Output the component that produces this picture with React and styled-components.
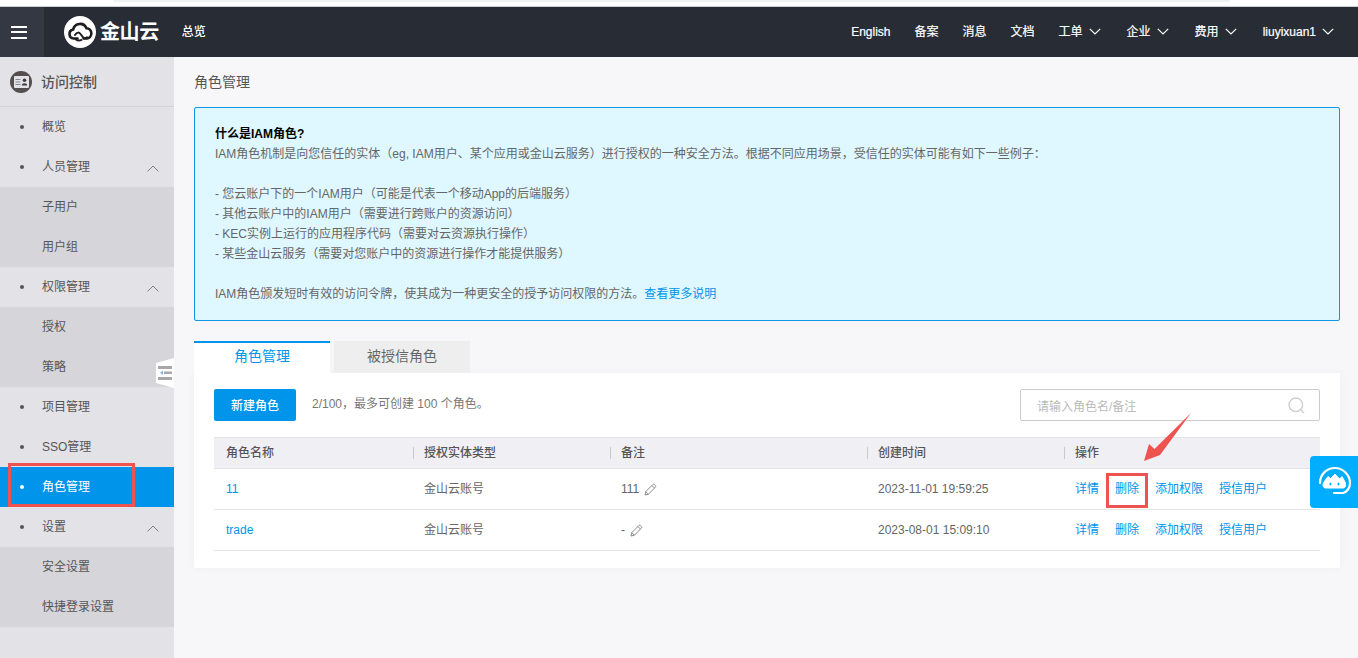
import React from "react";
import styled, { createGlobalStyle } from "styled-components";

const Global = createGlobalStyle`
  html, body { margin: 0; padding: 0; height: 100%; background: #f7f7f9; }
  body { font: 12px/20px "Liberation Sans", "Noto Sans CJK SC", sans-serif; color: #666; overflow: hidden; }
  * { box-sizing: border-box; }
`;

const Page = styled.div`
  position: relative;
  width: 1358px;
  height: 658px;
  display: flex;
  flex-direction: column;
  overflow: hidden;
`;
const TopStrip = styled.div`
  height: 7px;
  flex: none;
  background: #fff;
  border-bottom: 1px solid #d0d0d0;
  padding: 0 128px 0 113px;
`;
const AddressEdge = styled.div`
  height: 2px;
  background: #eff3f3;
  border-radius: 0 0 4px 4px;
`;
const Header = styled.header`
  height: 50px;
  flex: none;
  background: #282c34;
  display: flex;
  align-items: center;
  color: #fff;
  padding-right: 22px;
`;
const MenuButton = styled.div`
  width: 44px;
  height: 100%;
  background: #333842;
  display: flex;
  flex-direction: column;
  justify-content: center;
  gap: 3.5px;
  padding-left: 11px;
`;
const MenuBar = styled.span`
  display: block;
  width: 16px;
  height: 2px;
  background: #fff;
`;
const Logo = styled.div`
  display: flex;
  align-items: center;
  margin-left: 20px;
  gap: 4px;
`;
const LogoText = styled.span`
  font-size: 20px;
  font-weight: 700;
  line-height: 32px;
  letter-spacing: -0.4px;
  color: #fff;
`;
const Overview = styled.span`
  margin-left: 23px;
  margin-top: -1px;
  font-weight: 500;
  color: #fff;
`;
const TopNav = styled.nav`
  margin-left: auto;
  display: flex;
  align-items: center;
  gap: 24px;
`;
const TopItem = styled.span`
  display: flex;
  align-items: center;
  gap: 6px;
  margin-top: -1px;
  color: #fff;
  -webkit-text-stroke: 0.2px #fff;
`;
const ChevronIcon = styled.svg`
  margin-right: 2px;
`;
const Body = styled.div`
  flex: 1;
  display: flex;
  min-height: 0;
`;
const Sidebar = styled.aside`
  position: relative;
  width: 174px;
  flex: none;
  background: #e3e2e7;
`;
const SideTitle = styled.div`
  height: 50px;
  display: flex;
  align-items: center;
  gap: 9px;
  padding-left: 10px;
  border-bottom: 1px solid #d3d2d7;
  font-size: 14px;
  font-weight: 500;
  color: #555;
`;
const NavRow = styled.div`
  position: relative;
  height: 40px;
  display: flex;
  align-items: center;
  padding-left: 20px;
  color: ${(p) => (p.$active ? "#fff" : "#555")};
  background: ${(p) => (p.$active ? "#0094ea" : "transparent")};
`;
const Dot = styled.span`
  width: 4px;
  height: 4px;
  border-radius: 50%;
  margin-right: 18px;
  background: ${(p) => (p.$active ? "#fff" : "#555")};
`;
const Caret = styled.svg`
  position: absolute;
  right: 15px;
  top: 18px;
`;
const SubRow = styled.div`
  height: 40px;
  display: flex;
  align-items: center;
  padding-left: 42px;
  color: #555;
  background: #d6d5d9;
`;
const RedFrame = styled.span`
  position: absolute;
  border: 3px solid #ef5350;
  pointer-events: none;
`;
const NavFrame = styled(RedFrame)`
  left: 8px;
  top: -4px;
  width: 127px;
  height: 44px;
`;
const Handle = styled.div`
  position: absolute;
  left: 156px;
  top: 301px;
  width: 18px;
  height: 30px;
  background: #fff;
  clip-path: polygon(0 5px, 100% 0, 100% 100%, 0 25px);
  display: flex;
  align-items: center;
  padding-left: 2px;
`;
const Main = styled.main`
  flex: 1;
  min-width: 0;
  padding: 0 18px 0 20px;
`;
const PageTitle = styled.h1`
  margin: 0;
  height: 50px;
  display: flex;
  align-items: center;
  font-size: 14px;
  font-weight: 400;
  color: #555;
`;
const Notice = styled.section`
  height: 214px;
  padding: 16px 20px;
  border: 1px solid #0f97e6;
  border-radius: 2px;
  background: #dff7ff;
  color: #666;
`;
const NoticeHead = styled.div`
  font-weight: 700;
  color: #000;
`;
const NoticeLine = styled.div`
  min-height: 20px;
`;
const Link = styled.a`
  position: relative;
  color: #0094ea;
  text-decoration: none;
`;
const Tabs = styled.div`
  margin-top: 20px;
  display: flex;
  gap: 4px;
`;
const Tab = styled.div`
  width: 136px;
  height: 32px;
  padding-bottom: 5px;
  display: flex;
  align-items: center;
  justify-content: center;
  font-size: 14px;
  color: ${(p) => (p.$active ? "#0094ea" : "#666")};
  background: ${(p) => (p.$active ? "#fff" : "#eee")};
  border-top: 2px solid ${(p) => (p.$active ? "#0094ea" : "#eee")};
`;
const Panel = styled.section`
  height: 195px;
  padding: 16px 20px;
  background: #fff;
  border-radius: 0 0 2px 2px;
  box-shadow: 0 0 10px rgba(0, 0, 0, 0.04);
`;
const Toolbar = styled.div`
  display: flex;
  align-items: center;
  height: 32px;
`;
const PrimaryButton = styled.button`
  width: 82px;
  height: 32px;
  padding: 2px 0 0;
  border: 0;
  border-radius: 2px;
  background: #0094ea;
  color: #fff;
  font: inherit;
  font-weight: 500;
`;
const Quota = styled.span`
  margin: -3px 0 0 16px;
  color: #777;
`;
const Search = styled.div`
  margin-left: auto;
  width: 300px;
  height: 32px;
  border: 1px solid #ccc;
  border-radius: 2px;
  display: flex;
  align-items: center;
  justify-content: space-between;
  padding: 0 14px 0 16px;
  color: #bbb;
`;
const Placeholder = styled.span`
  margin-top: 3px;
`;
const TableGrid = styled.div`
  display: grid;
  grid-template-columns: 199px 197px 257px 197px 1fr;
  align-items: center;
`;
const HeadRow = styled(TableGrid)`
  margin-top: 16px;
  height: 32px;
  background: #f0eff4;
  border-top: 1px solid #e3e3e6;
  border-bottom: 1px solid #e3e3e6;
  font-weight: 500;
  color: #555;
`;
const HeadCell = styled.div`
  height: 12px;
  display: flex;
  align-items: center;
  padding-left: ${(p) => (p.$first ? "12px" : "10px")};
  border-left: ${(p) => (p.$first ? "0" : "1px solid #c9c9cc")};
`;
const DataRow = styled(TableGrid)`
  height: 41px;
  border-bottom: 1px solid #e6e6e6;
  color: #666;
`;
const Cell = styled.div`
  display: flex;
  align-items: center;
  gap: 5px;
  padding-left: ${(p) => (p.$first ? "12px" : "11px")};
`;
const Actions = styled(Cell)`
  gap: 16px;
`;
const ActionFrame = styled(RedFrame)`
  left: -9px;
  right: -9px;
  top: -6px;
  bottom: -9px;
`;
const Arrow = styled.svg`
  position: absolute;
  left: 1140px;
  top: 410px;
`;
const Float = styled.div`
  position: absolute;
  left: 1310px;
  top: 456px;
  width: 48px;
  height: 52px;
  background: #00adff;
  border-radius: 4px 0 0 4px;
`;

const Chevron = () => (
  <ChevronIcon width="12" height="7" viewBox="0 0 12 7" fill="none">
    <path d="M.8.8 6 6l5.200-5.200" stroke="#fff" strokeWidth="1.200" />
  </ChevronIcon>
);
const Pencil = () => (
  <svg width="13" height="13" viewBox="0 0 13 13" fill="none" stroke="#8a8a8a" strokeWidth="1">
    <path d="M1 12 1.800 8.600 8.900 1.500a1 1 0 0 1 1.400 0l1.200 1.200a1 1 0 0 1 0 1.400L4.400 11.200Z" />
    <path d="M1.800 8.600 4.400 11.200M8 2.600 10.400 5" />
  </svg>
);

const LogoMark = () => (
  <svg width="32" height="32" viewBox="0 0 32 32" fill="none">
    <circle cx="16" cy="16" r="16" fill="#fff" />
    <path
      d="M13.500 22.500H9.800a4.600 4.600 0 0 1-.6-9.100 7 7 0 0 1 13.300-1.200 5.200 5.200 0 0 1 .6 10.300h-3.400"
      stroke="#1d1d1f"
      strokeWidth="2.600"
      strokeLinecap="round"
    />
    <path
      d="M11 19c2-3 4-3 5.500-1l2.800 3.500c1.200 1.400 2.600 1 3.700-.3M12 23.500c1.700 1.400 3.700 1.300 5.500.4"
      stroke="#1d1d1f"
      strokeWidth="2"
      strokeLinecap="round"
    />
  </svg>
);

const AccessIcon = () => (
  <svg width="22" height="22" viewBox="0 0 22 22">
    <circle cx="11" cy="11" r="11" fill="#55504f" />
    <rect x="4" y="5" width="15" height="12" rx="1" fill="#e3e2e7" />
    <path d="M5.500 8h5v1h-5zM5.500 10.500h5v1h-5zM5.500 13h5v1h-5z" fill="#8a8a8c" />
    <circle cx="14.500" cy="9.300" r="1.800" fill="#3f3c3c" />
    <path d="M11.800 14.500c0-3 5.400-3 5.400 0z" fill="#3f3c3c" />
  </svg>
);

const HandleIcon = () => (
  <svg width="14" height="14" viewBox="0 0 14 14">
    <path d="M0 0h14v3H0zM6 5.500h8v2.600H6zM0 11h14v3H0z" fill="#a8a8a8" />
    <path d="M5 4.500 2 6.800 5 9z" fill="#7fb6dd" />
  </svg>
);

const SearchIcon = () => (
  <svg width="17" height="17" viewBox="0 0 17 17" fill="none" stroke="#cfcfcf" strokeWidth="1.400">
    <circle cx="7.800" cy="7.800" r="6.800" />
    <path d="M12.800 12.800 16 16" />
  </svg>
);

const SupportIcon = () => (
  <svg width="48" height="52" viewBox="0 0 48 52" fill="none">
    <path
      d="M10 27c0-9 7-15 15-15s15 7 15 15c0 5-3 9-7 10h-9"
      stroke="#fff"
      strokeWidth="2.200"
      strokeLinecap="round"
    />
    <path
      d="M15 32c-2.500-.8-2.500-4-1-6l4-5.500 2.500 2L25 18l4.500 5 2.500-2.500 3 5.500c1.200 2.500 1 6-2 6z"
      fill="#fff"
      stroke="#fff"
      strokeLinejoin="round"
    />
    <ellipse cx="20.500" cy="28" rx="1" ry="1.500" fill="#00adff" />
    <ellipse cx="28.500" cy="28" rx="1" ry="1.500" fill="#00adff" />
  </svg>
);

const nav = [
  { label: "概览" },
  { label: "人员管理", subs: ["子用户", "用户组"] },
  { label: "权限管理", subs: ["授权", "策略"] },
  { label: "项目管理" },
  { label: "SSO管理" },
  { label: "角色管理", active: true },
  { label: "设置", subs: ["安全设置", "快捷登录设置"] },
];

const topItems = [
  ["English"],
  ["备案"],
  ["消息"],
  ["文档"],
  ["工单", true],
  ["企业", true],
  ["费用", true],
  ["liuyixuan1", true],
];

const rows = [
  { name: "11", note: "111", time: "2023-11-01 19:59:25", mark: true },
  { name: "trade", note: "-", time: "2023-08-01 15:09:10" },
];

export default function App() {
  return (
    <Page>
      <Global />
      <TopStrip>
        <AddressEdge />
      </TopStrip>
      <Header>
        <MenuButton>
          <MenuBar />
          <MenuBar />
          <MenuBar />
        </MenuButton>
        <Logo>
          <LogoMark />
          <LogoText>金山云</LogoText>
        </Logo>
        <Overview>总览</Overview>
        <TopNav>
          {topItems.map(([label, more]) => (
            <TopItem key={label}>
              {label}
              {more && <Chevron />}
            </TopItem>
          ))}
        </TopNav>
      </Header>
      <Body>
        <Sidebar>
          <SideTitle>
            <AccessIcon />
            访问控制
          </SideTitle>
          {nav.map((item) => (
            <React.Fragment key={item.label}>
              <NavRow $active={item.active}>
                <Dot $active={item.active} />
                {item.label}
                {item.subs && (
                  <Caret width="12" height="7" viewBox="0 0 12 7" fill="none">
                    <path d="M.6 6.400 6 1l5.400 5.400" stroke="#7c8088" strokeWidth="1" />
                  </Caret>
                )}
                {item.active && <NavFrame />}
              </NavRow>
              {item.subs && item.subs.map((s) => <SubRow key={s}>{s}</SubRow>)}
            </React.Fragment>
          ))}
          <Handle>
            <HandleIcon />
          </Handle>
        </Sidebar>
        <Main>
          <PageTitle>角色管理</PageTitle>
          <Notice>
            <NoticeHead>什么是IAM角色?</NoticeHead>
            <NoticeLine>
              IAM角色机制是向您信任的实体（eg, IAM用户、某个应用或金山云服务）进行授权的一种安全方法。根据不同应用场景，受信任的实体可能有如下一些例子：
            </NoticeLine>
            <NoticeLine />
            <NoticeLine>- 您云账户下的一个IAM用户（可能是代表一个移动App的后端服务）</NoticeLine>
            <NoticeLine>- 其他云账户中的IAM用户（需要进行跨账户的资源访问）</NoticeLine>
            <NoticeLine>- KEC实例上运行的应用程序代码（需要对云资源执行操作）</NoticeLine>
            <NoticeLine>- 某些金山云服务（需要对您账户中的资源进行操作才能提供服务）</NoticeLine>
            <NoticeLine />
            <NoticeLine>
              IAM角色颁发短时有效的访问令牌，使其成为一种更安全的授予访问权限的方法。
              <Link>查看更多说明</Link>
            </NoticeLine>
          </Notice>
          <Tabs>
            <Tab $active>角色管理</Tab>
            <Tab>被授信角色</Tab>
          </Tabs>
          <Panel>
            <Toolbar>
              <PrimaryButton>新建角色</PrimaryButton>
              <Quota>2/100，最多可创建 100 个角色。</Quota>
              <Search>
                <Placeholder>请输入角色名/备注</Placeholder>
                <SearchIcon />
              </Search>
            </Toolbar>
            <HeadRow>
              <HeadCell $first>角色名称</HeadCell>
              <HeadCell>授权实体类型</HeadCell>
              <HeadCell>备注</HeadCell>
              <HeadCell>创建时间</HeadCell>
              <HeadCell>操作</HeadCell>
            </HeadRow>
            {rows.map((r) => (
              <DataRow key={r.name}>
                <Cell $first>
                  <Link>{r.name}</Link>
                </Cell>
                <Cell>金山云账号</Cell>
                <Cell>
                  {r.note}
                  <Pencil />
                </Cell>
                <Cell>{r.time}</Cell>
                <Actions>
                  <Link>详情</Link>
                  <Link>
                    删除
                    {r.mark && <ActionFrame />}
                  </Link>
                  <Link>添加权限</Link>
                  <Link>授信用户</Link>
                </Actions>
              </DataRow>
            ))}
          </Panel>
        </Main>
      </Body>
      <Arrow width="54" height="54" viewBox="0 0 54 54">
        <path d="M4 51 9 34 14.500 39 51 3 20 45 Z" fill="#ef5350" />
      </Arrow>
      <Float>
        <SupportIcon />
      </Float>
    </Page>
  );
}
